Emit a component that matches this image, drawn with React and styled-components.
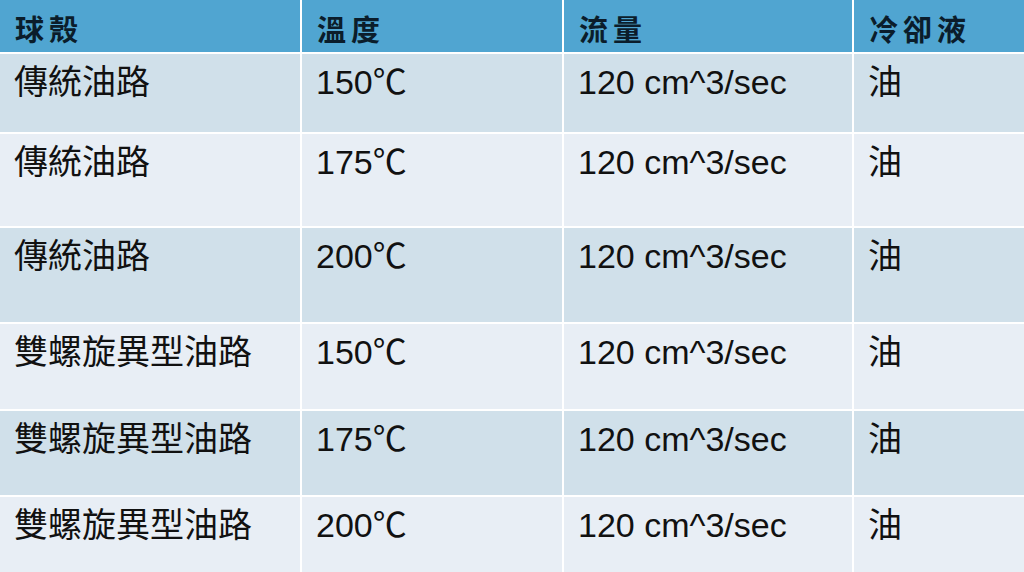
import React from 'react';
import styled, { createGlobalStyle } from 'styled-components';

const GlobalStyle = createGlobalStyle`
  html, body {
    margin: 0;
    padding: 0;
    background: #ffffff;
  }
`;

const Table = styled.div`
  display: grid;
  grid-template-columns: 300px 260px 288px 170px;
  grid-template-rows: 52px 78px 92px 94px 85px 84px 75px;
  gap: 2px;
  width: 1024px;
  height: 572px;
  overflow: hidden;
  background: #ffffff;
`;

const HeaderCell = styled.div`
  display: flex;
  align-items: center;
  padding: 3px 0 0 15px;
  background: #50a5d1;
  color: #0b1d2b;
  font-family: "Noto Sans CJK TC", sans-serif;
  font-weight: 700;
  font-size: 29px;
  letter-spacing: 5px;
`;

const Cell = styled.div`
  padding: 7px 0 0 14px;
  background: ${(p) => (p.$alt ? '#e8eef5' : '#d0e0ea')};
  color: #111111;
  font-family: "Liberation Sans", "Noto Sans CJK TC", sans-serif;
  font-size: 34px;
  line-height: 42px;
  white-space: nowrap;
`;

const headers = ['球殼', '溫度', '流量', '冷卻液'];

const rows = [
  ['傳統油路', '150℃', '120 cm^3/sec', '油'],
  ['傳統油路', '175℃', '120 cm^3/sec', '油'],
  ['傳統油路', '200℃', '120 cm^3/sec', '油'],
  ['雙螺旋異型油路', '150℃', '120 cm^3/sec', '油'],
  ['雙螺旋異型油路', '175℃', '120 cm^3/sec', '油'],
  ['雙螺旋異型油路', '200℃', '120 cm^3/sec', '油'],
];

const App = () => (
  <>
    <GlobalStyle />
    <Table>
      {headers.map((h) => (
        <HeaderCell key={h}>{h}</HeaderCell>
      ))}
      {rows.map((row, i) =>
        row.map((val, j) => (
          <Cell key={`${i}-${j}`} $alt={i % 2 === 1}>
            {val}
          </Cell>
        ))
      )}
    </Table>
  </>
);

export default App;
